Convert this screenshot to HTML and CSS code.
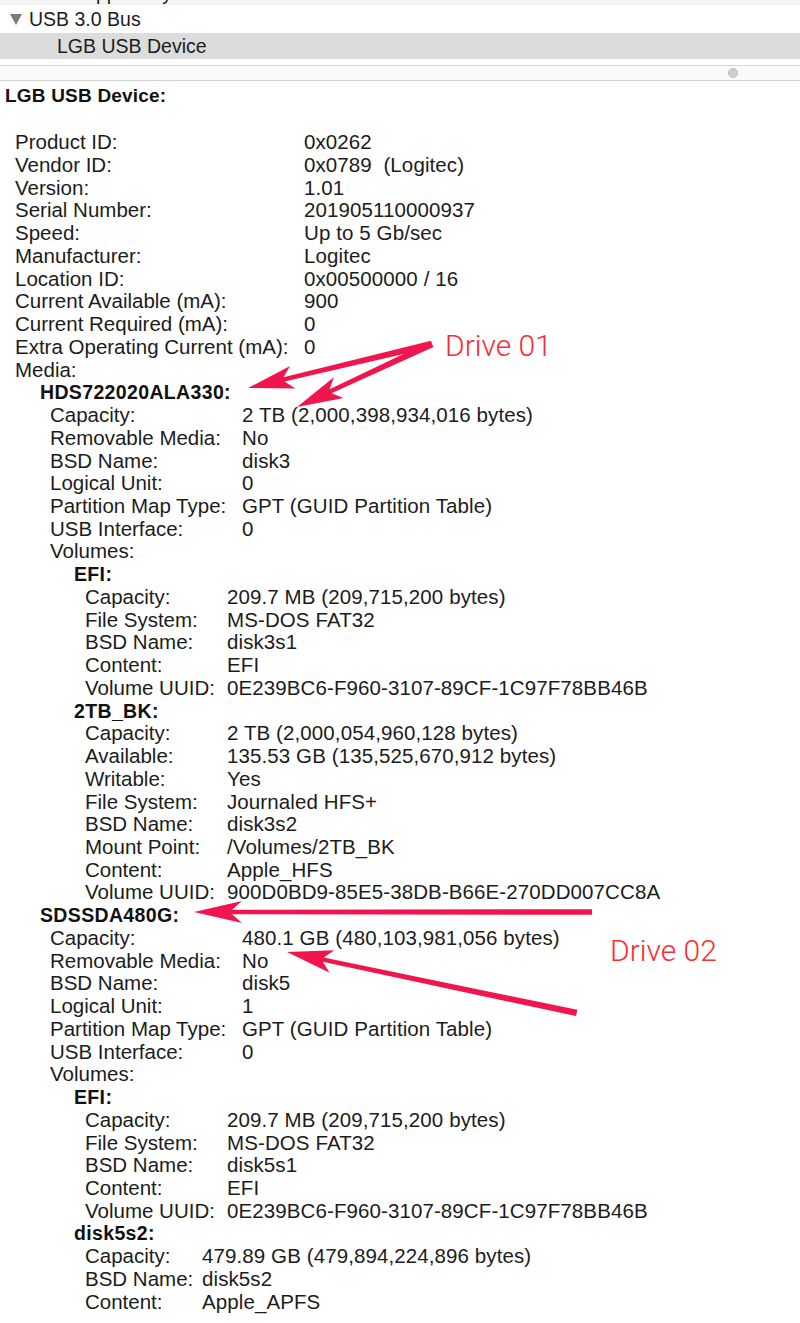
FILE: index.html
```html
<!DOCTYPE html>
<html>
<head>
<meta charset="utf-8">
<link rel="stylesheet" href="styles.css">
</head>
<body>
<div class="page">
  <div class="tree">
    <div class="prev-row"><span>Apple Keyboard</span></div>
    <div class="bus-row">
      <svg class="disclosure" width="12" height="11" viewBox="0 0 12 11"><polygon points="0,0 12,0 6,11" fill="#7b7b7b"/></svg>
      <span>USB 3.0 Bus</span>
    </div>
    <div class="sel-row">LGB USB Device</div>
  </div>
  <div class="gap"></div>
  <div class="split"><span class="dot"></span></div>

  <div class="info">
    <div class="title">LGB USB Device:</div>
    <div class="grid g-top">
      <span>Product ID:</span><span>0x0262</span>
      <span>Vendor ID:</span><span>0x0789&nbsp; (Logitec)</span>
      <span>Version:</span><span>1.01</span>
      <span>Serial Number:</span><span>201905110000937</span>
      <span>Speed:</span><span>Up to 5 Gb/sec</span>
      <span>Manufacturer:</span><span>Logitec</span>
      <span>Location ID:</span><span>0x00500000 / 16</span>
      <span>Current Available (mA):</span><span>900</span>
      <span>Current Required (mA):</span><span>0</span>
      <span>Extra Operating Current (mA):</span><span>0</span>
      <span class="full">Media:</span>
      <div class="full drive">
        <div class="head">HDS722020ALA330:</div>
        <div class="grid g-drive">
          <span>Capacity:</span><span>2 TB (2,000,398,934,016 bytes)</span>
          <span>Removable Media:</span><span>No</span>
          <span>BSD Name:</span><span>disk3</span>
          <span>Logical Unit:</span><span>0</span>
          <span>Partition Map Type:</span><span>GPT (GUID Partition Table)</span>
          <span>USB Interface:</span><span>0</span>
          <span class="full">Volumes:</span>
          <div class="full vol">
            <div class="head">EFI:</div>
            <div class="grid g-vol">
              <span>Capacity:</span><span>209.7 MB (209,715,200 bytes)</span>
              <span>File System:</span><span>MS-DOS FAT32</span>
              <span>BSD Name:</span><span>disk3s1</span>
              <span>Content:</span><span>EFI</span>
              <span>Volume UUID:</span><span>0E239BC6-F960-3107-89CF-1C97F78BB46B</span>
            </div>
          </div>
          <div class="full vol">
            <div class="head">2TB_BK:</div>
            <div class="grid g-vol">
              <span>Capacity:</span><span>2 TB (2,000,054,960,128 bytes)</span>
              <span>Available:</span><span>135.53 GB (135,525,670,912 bytes)</span>
              <span>Writable:</span><span>Yes</span>
              <span>File System:</span><span>Journaled HFS+</span>
              <span>BSD Name:</span><span>disk3s2</span>
              <span>Mount Point:</span><span>/Volumes/2TB_BK</span>
              <span>Content:</span><span>Apple_HFS</span>
              <span>Volume UUID:</span><span>900D0BD9-85E5-38DB-B66E-270DD007CC8A</span>
            </div>
          </div>
        </div>
      </div>
      <div class="full drive">
        <div class="head">SDSSDA480G:</div>
        <div class="grid g-drive">
          <span>Capacity:</span><span>480.1 GB (480,103,981,056 bytes)</span>
          <span>Removable Media:</span><span>No</span>
          <span>BSD Name:</span><span>disk5</span>
          <span>Logical Unit:</span><span>1</span>
          <span>Partition Map Type:</span><span>GPT (GUID Partition Table)</span>
          <span>USB Interface:</span><span>0</span>
          <span class="full">Volumes:</span>
          <div class="full vol">
            <div class="head">EFI:</div>
            <div class="grid g-vol">
              <span>Capacity:</span><span>209.7 MB (209,715,200 bytes)</span>
              <span>File System:</span><span>MS-DOS FAT32</span>
              <span>BSD Name:</span><span>disk5s1</span>
              <span>Content:</span><span>EFI</span>
              <span>Volume UUID:</span><span>0E239BC6-F960-3107-89CF-1C97F78BB46B</span>
            </div>
          </div>
          <div class="full vol">
            <div class="head">disk5s2:</div>
            <div class="grid g-vol2">
              <span>Capacity:</span><span>479.89 GB (479,894,224,896 bytes)</span>
              <span>BSD Name:</span><span>disk5s2</span>
              <span>Content:</span><span>Apple_APFS</span>
            </div>
          </div>
        </div>
      </div>
    </div>
  </div>

  <svg class="arrows" width="800" height="1323" viewBox="0 0 800 1323">
    <g fill="#f0164d">
      <path transform="translate(248,388) rotate(-13.45)" d="M0,0 L46,-11.5 L37,-2.2 L189,-3.4 L189,3.4 L37,2.2 L46,11.5 Z"/>
      <path transform="translate(297,407) rotate(-25)" d="M0,0 L46,-11.5 L37,-2.2 L149,-3.4 L149,3.4 L37,2.2 L46,11.5 Z"/>
      <path transform="translate(194,912) rotate(0)" d="M0,0 L48,-11 L38,-2.2 L398,-2.8 L398,2.8 L38,2.2 L48,11 Z"/>
      <path transform="translate(287,952) rotate(11.88)" d="M0,0 L46,-11.5 L37,-2.2 L296,-3.2 L296,3.2 L37,2.2 L46,11.5 Z"/>
    </g>
  </svg>
  <div class="note note-1">Drive 01</div>
  <div class="note note-2">Drive 02</div>
</div>
</body>
</html>
```

FILE: styles.css
```css
html, body {
  margin: 0;
  padding: 0;
  background: #ffffff;
}

.page {
  position: relative;
  width: 800px;
  height: 1323px;
  overflow: hidden;
  font-family: "Liberation Sans", Arial, sans-serif;
  color: #1c1c1c;
}

.tree {
  font-size: 19.5px;
}

.prev-row {
  height: 5px;
  background: #f4f4f4;
  overflow: hidden;
}

.prev-row span {
  display: block;
  line-height: 26px;
  margin-top: -20px;
  padding-left: 83px;
}

.bus-row {
  height: 28px;
  display: flex;
  align-items: center;
  gap: 7px;
  padding-left: 10px;
}

.disclosure {
  display: block;
}

.sel-row {
  height: 26px;
  display: flex;
  align-items: center;
  padding-left: 57px;
  background: #dcdcdc;
}

.gap {
  height: 6px;
}

.split {
  height: 14px;
  border-top: 1px solid #d8d8d8;
  border-bottom: 1px solid #d2d2d2;
  background: #fafafa;
  display: flex;
  align-items: center;
  justify-content: flex-end;
  padding-right: 62px;
}

.dot {
  width: 10px;
  height: 10px;
  box-sizing: border-box;
  border-radius: 50%;
  background: #cecece;
  border: 1px solid #bdbdbd;
}

.info {
  padding: 3.5px 0 0 5px;
  font-size: 20.5px;
  line-height: 22.73px;
  white-space: nowrap;
}

.info .grid > span:nth-child(even) {
  letter-spacing: 0.1px;
}

.title {
  font-weight: bold;
  font-size: 19px;
  letter-spacing: 0.2px;
  color: #111;
  margin-bottom: 24px;
}

.grid {
  display: grid;
}

.full {
  grid-column: 1 / -1;
}

.head {
  font-weight: bold;
  font-size: 19.5px;
  letter-spacing: 0.35px;
  color: #111;
}

.g-top {
  margin-left: 10px;
  grid-template-columns: 289px auto;
}

.drive {
  margin-left: 25px;
}

.g-drive {
  padding-left: 10px;
  grid-template-columns: 192px auto;
}

.vol {
  margin-left: 24px;
}

.g-vol {
  padding-left: 11px;
  grid-template-columns: 142px auto;
}

.g-vol2 {
  padding-left: 11px;
  grid-template-columns: 117px auto;
}

.arrows {
  position: absolute;
  left: 0;
  top: 0;
  pointer-events: none;
}

.note {
  position: absolute;
  font-family: Roboto, "Liberation Sans", sans-serif;
  font-weight: 300;
  font-size: 30px;
  line-height: 30px;
  color: #ff2a30;
  white-space: nowrap;
}

.note-1 {
  left: 445px;
  top: 331px;
}

.note-2 {
  left: 610px;
  top: 936px;
}
```
